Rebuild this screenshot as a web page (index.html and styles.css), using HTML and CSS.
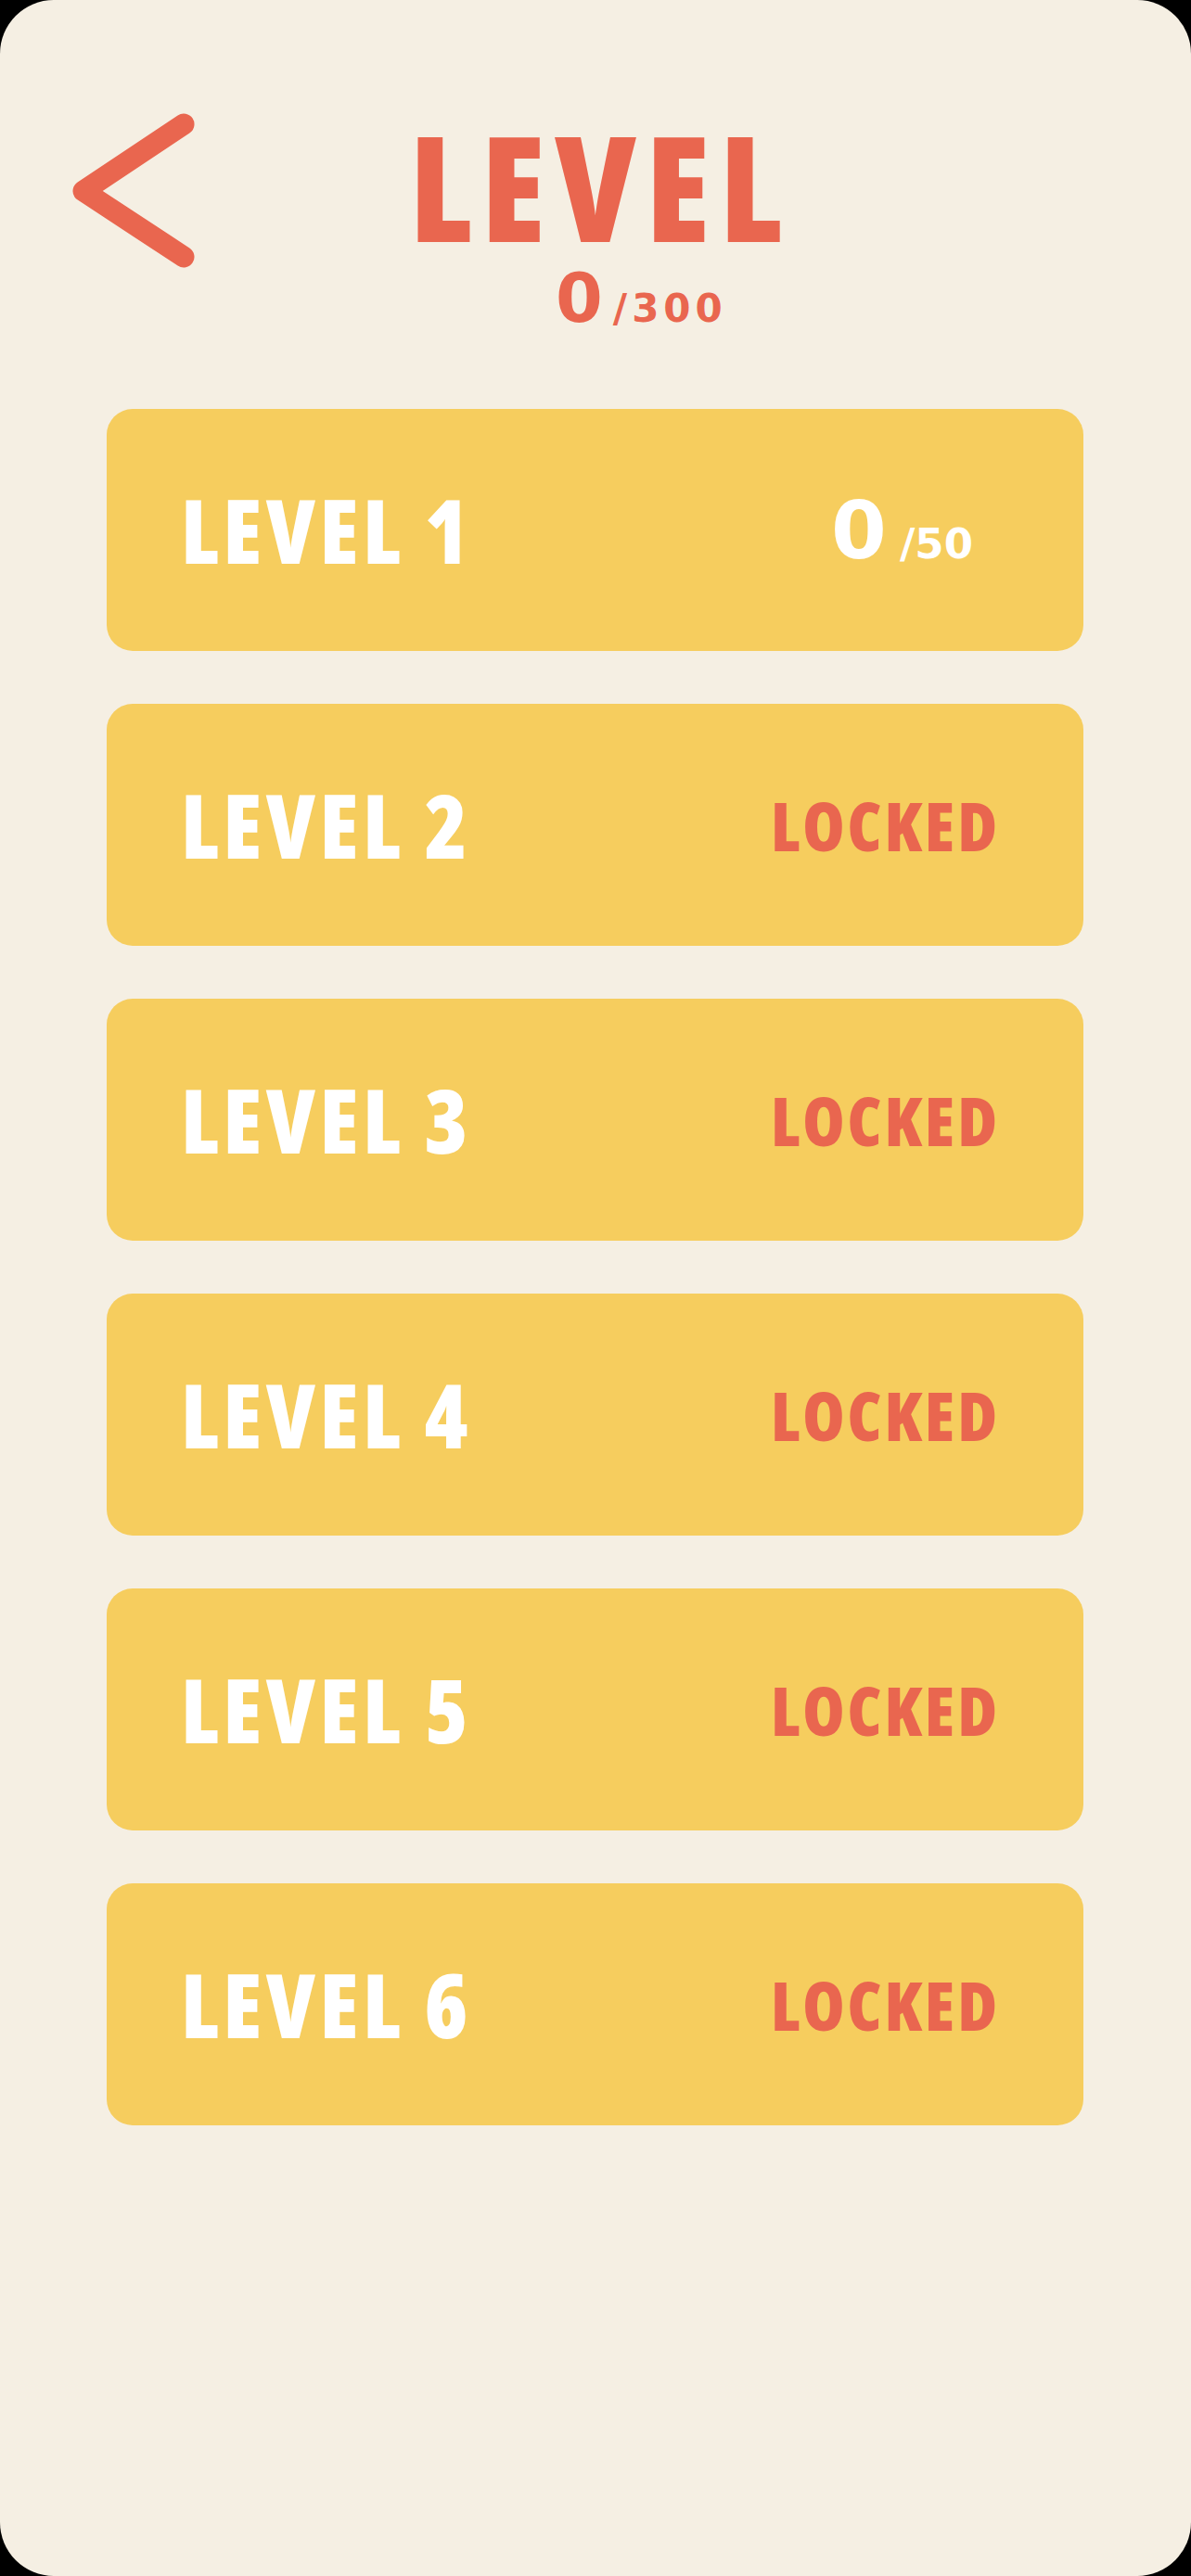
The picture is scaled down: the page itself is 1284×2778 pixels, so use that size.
FILE: index.html
```html
<!DOCTYPE html>
<html lang="en">
<head>
<meta charset="utf-8">
<title>Level</title>
<link rel="stylesheet" href="styles.css">
</head>
<body>
<div class="screen">
  <header class="top">
    <a class="back" href="#" aria-label="Back">
      <svg viewBox="0 0 140 180" width="140" height="180">
        <polyline points="128,18 20,90 128,161" fill="none" stroke="#E9664F" stroke-width="23" stroke-linecap="round" stroke-linejoin="round"/>
      </svg>
    </a>
    <h1 class="title">LEVEL</h1>
    <div class="total"><span class="big">0</span><span class="small">/300</span></div>
  </header>
  <main class="levels">
    <div class="card"><span class="name">LEVEL 1</span><span class="progress"><span class="big">0</span><span class="small">/50</span></span></div>
    <div class="card"><span class="name">LEVEL 2</span><span class="locked">LOCKED</span></div>
    <div class="card"><span class="name">LEVEL 3</span><span class="locked">LOCKED</span></div>
    <div class="card"><span class="name">LEVEL 4</span><span class="locked">LOCKED</span></div>
    <div class="card"><span class="name">LEVEL 5</span><span class="locked">LOCKED</span></div>
    <div class="card"><span class="name">LEVEL 6</span><span class="locked">LOCKED</span></div>
  </main>
</div>
</body>
</html>
```
FILE: styles.css
```css
html, body {
  margin: 0;
  padding: 0;
  background: #000;
}
.screen {
  width: 1284px;
  height: 2778px;
  background: #F5EFE3;
  border-radius: 58px;
  overflow: hidden;
  font-family: "Open Sans", "Liberation Sans", sans-serif;
  font-stretch: 75%;
  font-weight: 800;
}
.top {
  display: grid;
  grid-template-columns: 1fr auto 1fr;
  padding-top: 122px;
}
.back {
  grid-column: 1;
  grid-row: 1 / span 2;
  justify-self: start;
  align-self: start;
  margin-left: 70px;
  margin-top: -6px;
  display: block;
  line-height: 0;
}
.title {
  grid-column: 2;
  grid-row: 1;
  margin: 0;
  padding-left: 10px;
  font-size: 157px;
  letter-spacing: 10px;
  line-height: 1;
  color: #E9664F;
  font-weight: 800;
}
.total {
  grid-column: 1 / -1;
  grid-row: 2;
  justify-self: start;
  display: flex;
  align-items: baseline;
  padding-left: 599px;
  margin-top: 6px;
  color: #E9664F;
  line-height: 1;
  font-family: "DejaVu Sans", "Liberation Sans", sans-serif;
  font-stretch: 100%;
  font-weight: 700;
}
.total .big { font-size: 73px; }
.total .small { font-size: 42px; margin-left: 11px; letter-spacing: 5px; }
.levels {
  display: flex;
  flex-direction: column;
  gap: 57px;
  margin: 83px 116px 0 115px;
}
.card {
  height: 261px;
  background: #F6CD5E;
  border-radius: 28px;
  display: flex;
  align-items: center;
  justify-content: space-between;
  padding: 0 90px 0 80px;
}
.name {
  color: #fff;
  font-size: 95px;
  letter-spacing: 4.5px;
  line-height: 1;
}
.locked {
  color: #E9664F;
  font-size: 73px;
  letter-spacing: 3px;
  line-height: 1;
}
.progress {
  display: flex;
  align-items: baseline;
  color: #fff;
  line-height: 1;
  margin-right: 29px;
  font-family: "DejaVu Sans", "Liberation Sans", sans-serif;
  font-stretch: 100%;
  font-weight: 700;
}
.progress .big { font-size: 86px; }
.progress .small { font-size: 45px; margin-left: 14px; }
```
